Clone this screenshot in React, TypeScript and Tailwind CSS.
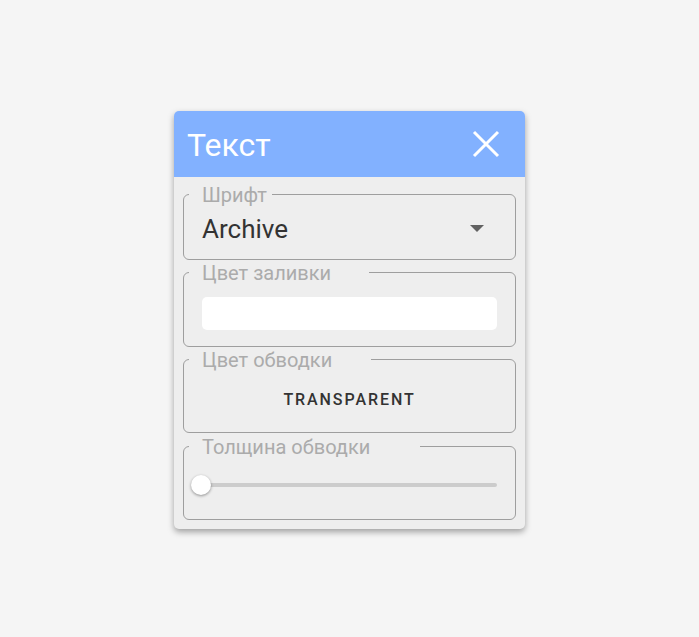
import React from 'react';

const Legend: React.FC<{ w: string; children: React.ReactNode }> = ({ w, children }) => (
  <legend className={`${w} pl-[13px] text-[20px] leading-[20px] text-[#ababab]`}>
    <span className="relative top-[1px]">{children}</span>
  </legend>
);

export default function App() {
  return (
    <div className="min-h-screen w-full bg-[#f5f5f5] font-['Roboto',sans-serif]">
      <div className="pt-[111px] pl-[174px]">
        <div className="w-[351px] overflow-hidden rounded-[5px] bg-[#eeeeee] shadow-[0_3px_6px_rgba(0,0,0,0.35)]">
          <div className="flex h-[66px] items-center justify-between bg-[#82b1ff] pl-[13px] pr-[24px]">
            <span className="relative top-[1px] text-[32px] leading-none text-white">Текст</span>
            <svg width="30" height="30" viewBox="0 0 30 30" className="text-white">
              <path d="M3 3L27 27M27 3L3 27" stroke="currentColor" strokeWidth="3" />
            </svg>
          </div>

          <div className="flex flex-col gap-[2px] px-[9px] pt-[7px] pb-[9px]">
            <fieldset className="h-[76px] rounded-[6px] border border-[#9e9e9e] px-[5px]">
              <Legend w="w-[83px]">Шрифт</Legend>
              <div className="mx-[13px] mt-[9px] flex items-center justify-between">
                <span className="text-[26px] leading-[32px] text-[#333]">Archive</span>
                <svg width="14" height="8" viewBox="0 0 14 8" className="mr-[13px] text-[#616161]">
                  <path d="M0 0h14L7 7z" fill="currentColor" />
                </svg>
              </div>
            </fieldset>

            <fieldset className="h-[85px] rounded-[6px] border border-[#9e9e9e] px-[5px]">
              <Legend w="w-[180px]">Цвет заливки</Legend>
              <div className="mx-[13px] mt-[15px] h-[33px] rounded-[5px] bg-white" />
            </fieldset>

            <fieldset className="h-[84px] rounded-[6px] border border-[#9e9e9e] px-[5px]">
              <Legend w="w-[182px]">Цвет обводки</Legend>
              <div className="mx-[13px] mt-[21px] text-center text-[16px] font-medium leading-[20px] tracking-[0.12em] text-[#333]">
                TRANSPARENT
              </div>
            </fieldset>

            <fieldset className="mt-[1px] h-[84px] rounded-[6px] border border-[#9e9e9e] px-[5px]">
              <Legend w="w-[231px]">Толщина обводки</Legend>
              <div className="relative mx-[13px] mt-[19px] h-[20px]">
                <div className="absolute left-0 right-0 top-[8px] h-[4px] rounded-full bg-[#cccccc]" />
                <div className="absolute left-[-11px] top-0 h-[20px] w-[20px] rounded-full bg-white shadow-[0_1px_3px_rgba(0,0,0,0.4)]" />
              </div>
            </fieldset>
          </div>
        </div>
      </div>
    </div>
  );
}
